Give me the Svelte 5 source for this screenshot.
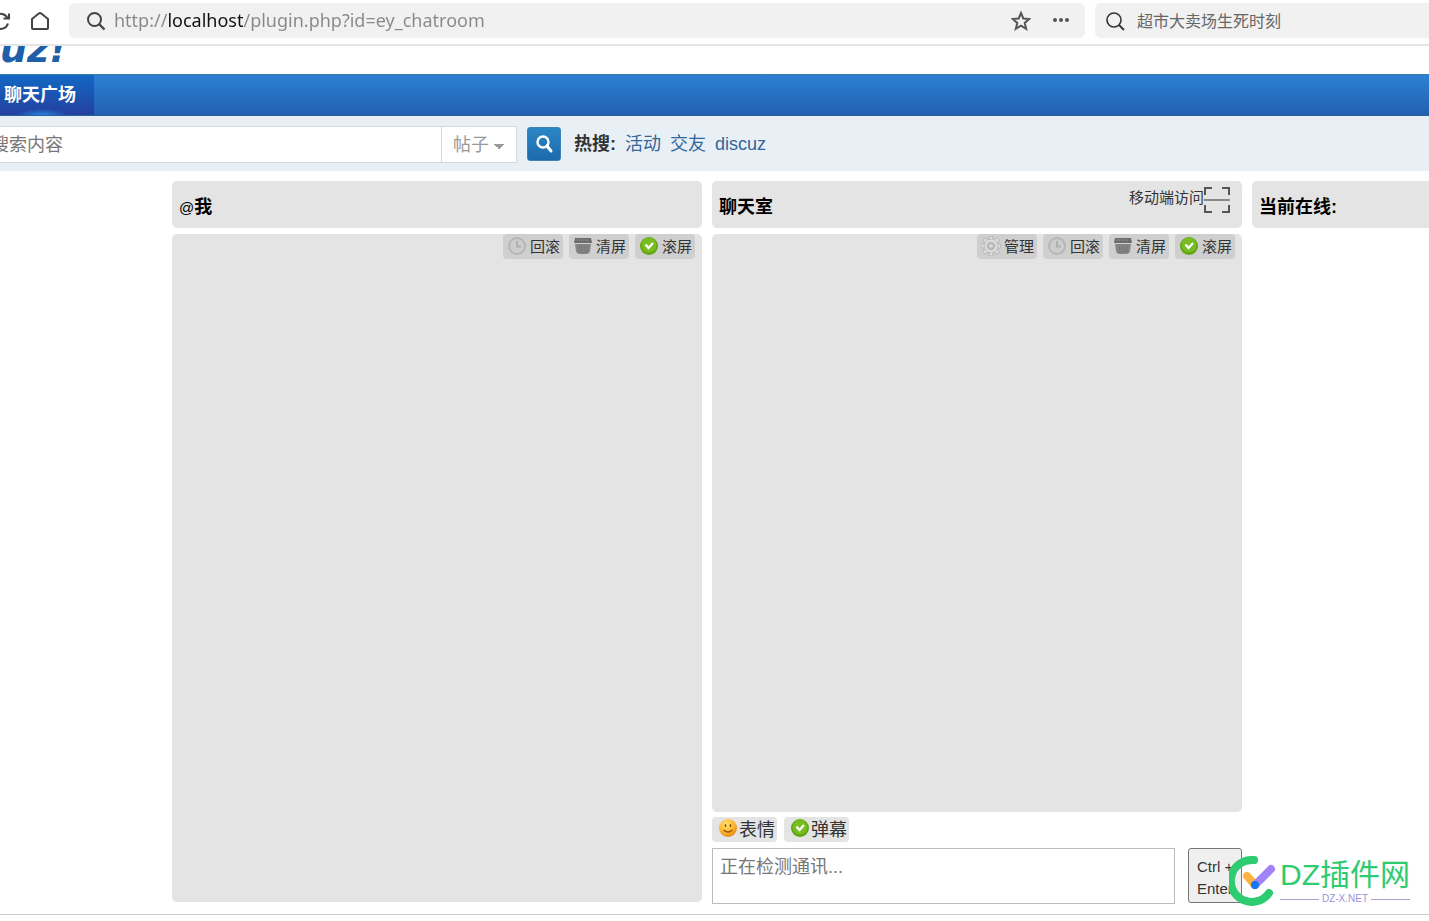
<script lang="ts">
    let url: string = 'http://localhost/plugin.php?id=ey_chatroom';
    let browserQuery: string = '超市大卖场生死时刻';
    let forumQuery: string = '';
    let message: string = '';

    const hotWords: string[] = ['活动', '交友', 'discuz'];

    const mentionTools = [
        { icon: 'clock', label: '回滚' },
        { icon: 'trash', label: '清屏' },
        { icon: 'check', label: '滚屏' }
    ];
    const roomTools = [{ icon: 'gear', label: '管理' }, ...mentionTools];
    const inputTools = [
        { icon: 'smile', label: '表情' },
        { icon: 'check', label: '弹幕' }
    ];

    // Eight teeth around the gear
    const teeth: number[] = [0, 45, 90, 135, 180, 225, 270, 315];
</script>

{#snippet toolIcon(name: string)}
    <svg class="tool-icon" viewBox="0 0 20 20" aria-hidden="true">
        {#if name === 'clock'}
            <circle cx="10" cy="10" r="8" fill="#cdcdcd" stroke="#b6b6b6" stroke-width="2" />
            <path d="M10 5v5.500h4" fill="none" stroke="#b0b0b0" stroke-width="2" />
        {:else if name === 'trash'}
            <path d="M2 2h16l1 5H1z" fill="#6c6c6c" />
            <path d="M4 4h12" stroke="#a5a5a5" stroke-width="1" stroke-dasharray="1 1" />
            <path d="M2 8h16l-1 7q-.5 3-4 3H7q-3.500 0-4-3z" fill="#858585" />
            <path d="M6 9l1 8M9 9v8M12 9v8M15 9l-1 8" stroke="#757575" />
        {:else if name === 'check'}
            <circle cx="10" cy="10" r="9" fill="#62a514" />
            <circle cx="10" cy="9" r="7.500" fill="#78bd20" />
            <path d="M6.500 8.500l3 3.500L14 7" fill="none" stroke="#fff" stroke-width="2.200" />
        {:else if name === 'gear'}
            {#each teeth as angle}
                <rect
                    x="8"
                    y="0"
                    width="4"
                    height="5"
                    rx="1"
                    fill="#dcdcdc"
                    stroke="#aaa"
                    stroke-width=".8"
                    transform="rotate({angle} 10 10)"
                />
            {/each}
            <circle cx="10" cy="10" r="6.800" fill="#dcdcdc" stroke="#b4b4b4" stroke-width=".6" />
            <circle cx="10" cy="10" r="3.500" fill="#c4c4c4" stroke="#a8a8a8" />
            <circle cx="10" cy="10" r="1.500" fill="#dcdcdc" />
        {:else}
            <defs>
                <radialGradient id="face" cx=".4" cy=".3" r=".7">
                    <stop offset="0" stop-color="#ffe173" />
                    <stop offset=".6" stop-color="#fbb92e" />
                    <stop offset="1" stop-color="#e8891a" />
                </radialGradient>
            </defs>
            <circle cx="10" cy="10" r="9" fill="url(#face)" />
            <ellipse cx="7.500" cy="7.500" rx=".8" ry="1.600" fill="#7b4310" />
            <ellipse cx="12.500" cy="7.500" rx=".8" ry="1.600" fill="#7b4310" />
            <path d="M5.500 12q4.500 4 9 0" fill="none" stroke="#a65412" stroke-width="1.200" />
        {/if}
    </svg>
{/snippet}

<div class="page">
    <div class="browser-bar">
        <button class="bar-button reload" aria-label="重新加载">
            <svg width="20" height="20" viewBox="0 0 20 20">
                <path d="M16.500 7A7.500 7.500 0 1 0 17 12.500M18 2.500V7.500H12.500" fill="none" stroke="#444" stroke-width="2" />
            </svg>
        </button>
        <button class="bar-button" aria-label="主页">
            <svg width="20" height="20" viewBox="0 0 20 20">
                <path d="M2 8L9 2.300q1-.6 2 0L18 8V17q0 1-1 1H3q-1 0-1-1z" fill="none" stroke="#444" stroke-width="2" />
            </svg>
        </button>
        <div class="address">
            <svg width="20" height="20" viewBox="0 0 20 20">
                <circle cx="8.500" cy="8.500" r="6.500" fill="none" stroke="#444" stroke-width="2" />
                <path d="M13 13l5.500 5.500" stroke="#444" stroke-width="2.400" />
            </svg>
            <input class="url" type="text" aria-label="地址" bind:value={url} />
            <button class="bar-button" aria-label="收藏">
                <svg width="20" height="20" viewBox="0 0 20 20">
                    <path d="M10 2l2.300 5.500 6 .5-4.600 3.900 1.500 5.900L10 14.600l-5.200 3.200 1.500-5.900L1.700 8l6-.5z" fill="none" stroke="#555" stroke-width="2" />
                </svg>
            </button>
            <button class="bar-button" aria-label="更多">
                <svg width="20" height="20" viewBox="0 0 20 20">
                    <circle cx="4" cy="9" r="2" fill="#555" />
                    <circle cx="10" cy="9" r="2" fill="#555" />
                    <circle cx="16" cy="9" r="2" fill="#555" />
                </svg>
            </button>
        </div>
        <div class="browser-search">
            <svg width="20" height="20" viewBox="0 0 20 20">
                <circle cx="9" cy="9" r="7" fill="none" stroke="#333" stroke-width="1.600" />
                <path d="M14 14l5 5" stroke="#333" stroke-width="1.800" />
            </svg>
            <input type="text" aria-label="搜索" bind:value={browserQuery} />
        </div>
    </div>

    <header class="logo">uz!</header>

    <nav>
        <a class="active" href="#square">聊天广场</a>
    </nav>

    <form class="search-bar" on:submit|preventDefault>
        <div class="search-box">
            <input type="text" placeholder="搜索内容" aria-label="搜索内容" bind:value={forumQuery} />
            <select aria-label="搜索类型">
                <option>帖子</option>
            </select>
        </div>
        <button class="search-button" aria-label="搜索">
            <svg width="20" height="20" viewBox="0 0 20 20">
                <circle cx="9" cy="8" r="5.500" fill="none" stroke="#fff" stroke-width="2.400" />
                <path d="M13 12l4 5" stroke="#fff" stroke-width="3" stroke-linecap="round" />
            </svg>
        </button>
        <div class="hot">
            <strong>热搜:</strong>
            {#each hotWords as word}
                <a href="#hot">{word}</a>
            {/each}
        </div>
    </form>

    <main>
        <section>
            <div class="panel-head"><h2><span class="at">@</span>我</h2></div>
            <div class="panel">
                {#each mentionTools as tool}
                    <button class="tool">{@render toolIcon(tool.icon)}{tool.label}</button>
                {/each}
            </div>
        </section>

        <section>
            <div class="panel-head">
                <h2>聊天室</h2>
                <a class="mobile" href="#mobile">
                    移动端访问
                    <svg width="26" height="26" viewBox="0 0 26 26" fill="none" stroke="#555" stroke-width="2">
                        <path d="M1 8V1H8M18 1H25V8M25 18V25H18M8 25H1V18" />
                        <path d="M0 13H26" stroke="#888" />
                    </svg>
                </a>
            </div>
            <div class="panel">
                {#each roomTools as tool}
                    <button class="tool">{@render toolIcon(tool.icon)}{tool.label}</button>
                {/each}
            </div>
            <div class="input-tools">
                {#each inputTools as tool}
                    <button class="tool large">{@render toolIcon(tool.icon)}{tool.label}</button>
                {/each}
            </div>
            <div class="composer">
                <textarea placeholder="正在检测通讯..." aria-label="消息" bind:value={message}></textarea>
                <button class="send">Ctrl + Enter</button>
            </div>
        </section>

        <section>
            <div class="panel-head online"><h2>当前在线:</h2></div>
        </section>
    </main>

    <div class="watermark">
        <svg width="48" height="52" viewBox="0 0 48 52" fill="none" stroke-linecap="round">
            <path d="M25 5A21 21 0 1 0 40 38" stroke="#2dcc70" stroke-width="8" />
            <path d="M18 21L26 30" stroke="#ffb33e" stroke-width="8" />
            <path d="M26 30L42 14" stroke="#a283f7" stroke-width="8" />
            <circle cx="26" cy="30" r="4" fill="#1677f2" />
        </svg>
        <div class="brand">
            <span class="brand-name">DZ插件网</span>
            <span class="brand-site">DZ-X.NET</span>
        </div>
    </div>
</div>

<style>
    :global(body) {
        margin: 0;
        background: #fff;
    }

    .page {
        position: relative;
        display: flex;
        flex-direction: column;
        box-sizing: border-box;
        min-height: 100vh;
        padding-bottom: 6px;
        overflow: hidden;
        font-family: 'Liberation Sans', 'Noto Sans CJK SC', sans-serif;
        font-size: 18px;
        color: #333;
    }

    button,
    input,
    select,
    textarea {
        font: inherit;
        color: inherit;
        margin: 0;
        padding: 0;
        border: 0;
        background: none;
        box-sizing: border-box;
        outline: none;
    }

    button {
        cursor: pointer;
    }

    a {
        text-decoration: none;
    }

    svg {
        display: block;
        flex-shrink: 0;
    }

    .browser-bar {
        display: flex;
        align-items: center;
        padding: 3px 0 6px;
        border-bottom: 2px solid #e5e5e7;
    }

    .bar-button {
        margin-right: 19px;
    }

    .reload {
        margin-left: -9px;
    }

    .address,
    .browser-search {
        display: flex;
        align-items: center;
        box-sizing: border-box;
        height: 35px;
        background: #f1f1f1;
        border-radius: 6px;
    }

    .address {
        flex: 1;
        padding-left: 17px;
        margin-right: 10px;
    }

    .address .bar-button {
        margin-right: 20px;
    }

    .address .bar-button:last-child {
        margin-right: 14px;
    }

    /* The host part of the address is darker than the rest */
    .url {
        flex: 1;
        height: 35px;
        margin-left: 8px;
        padding-bottom: 2px;
        font-family: 'Noto Sans', sans-serif;
        background: linear-gradient(90deg, #888 54px, #111 54px, #111 130px, #888 130px);
        background-clip: text;
        -webkit-text-fill-color: transparent;
    }

    .browser-search {
        width: 334px;
        padding-left: 10px;
        border-radius: 6px 0 0 6px;
    }

    .browser-search input {
        flex: 1;
        min-width: 0;
        margin-left: 12px;
        padding-bottom: 2px;
        font-size: 16px;
        color: #666;
    }

    .logo {
        height: 28px;
        overflow: hidden;
        font: italic bold 38px/6px 'DejaVu Sans', sans-serif;
        color: #1f5fa9;
    }

    nav {
        display: flex;
        box-sizing: border-box;
        height: 42px;
        border-top: 1px solid #3a7ba8;
        border-bottom: 1px solid #2860a0;
        background: linear-gradient(#2b80d3, #2360b0);
    }

    nav a {
        box-sizing: border-box;
        width: 94px;
        padding-left: 4px;
        line-height: 40px;
        font-weight: bold;
        color: #fff;
        background:
            radial-gradient(ellipse 26px 6px at 42px 100%, #2487e0, transparent),
            linear-gradient(#1268c4, #24409f);
    }

    .search-bar {
        display: flex;
        align-items: center;
        box-sizing: border-box;
        height: 55px;
        padding-top: 1px;
        background: #e8eff5;
    }

    .search-box {
        display: flex;
        box-sizing: border-box;
        width: 527px;
        height: 37px;
        margin: 0 10px 0 -10px;
        border: 1px solid #ced9e2;
        background: #fff;
    }

    .search-box input {
        flex: 1;
        min-width: 0;
        padding-top: 2px;
        color: #666;
    }

    .search-box input::placeholder {
        color: #777;
    }

    .search-box select {
        width: 75px;
        padding: 2px 0 0 11px;
        border-left: 1px solid #ced9e2;
        appearance: none;
        color: #999;
        background:
            linear-gradient(to bottom right, #999 50%, transparent 50%) 57px 17px / 5px 5px no-repeat,
            linear-gradient(to bottom left, #999 50%, transparent 50%) 52px 17px / 5px 5px no-repeat;
    }

    .search-button {
        display: flex;
        align-items: center;
        justify-content: center;
        width: 34px;
        height: 34px;
        margin-right: 13px;
        border: 1px solid #3a82b4;
        border-radius: 3px;
        background: linear-gradient(#2b86c5, #1c6bab);
    }

    .hot {
        display: flex;
        align-items: baseline;
        gap: 9px;
        padding-bottom: 4px;
    }

    .hot a {
        color: #369;
    }

    main {
        flex: 1;
        display: grid;
        grid-template-columns: minmax(0, 1fr) minmax(0, 1fr) 177px;
        gap: 10px;
        padding: 10px 0 10px 172px;
        border-bottom: 1px solid #ccc;
    }

    section {
        display: flex;
        flex-direction: column;
    }

    .panel-head {
        display: flex;
        justify-content: space-between;
        box-sizing: border-box;
        height: 47px;
        margin-bottom: 6px;
        padding: 0 12px 0 7px;
        border-radius: 5px;
        background: #e4e4e4;
    }

    .online {
        border-radius: 5px 0 0 5px;
    }

    h2 {
        margin: 0;
        font-size: 18px;
        line-height: 53px;
        color: #000;
    }

    .at {
        font-size: 15px;
        font-weight: normal;
    }

    .mobile {
        display: flex;
        align-items: flex-start;
        height: 26px;
        margin-top: 6px;
        font-size: 15px;
        line-height: 22px;
        color: #333;
    }

    .panel {
        flex: 1;
        display: flex;
        align-items: flex-start;
        justify-content: flex-end;
        gap: 6px;
        padding-right: 7px;
        border-radius: 5px;
        background: #e4e4e4;
    }

    section:first-child .panel {
        margin-bottom: 2px;
    }

    .tool {
        display: flex;
        align-items: center;
        gap: 3px;
        height: 25px;
        padding: 0 3px 2px 4px;
        border-radius: 4px;
        font-size: 15px;
        background: #cfcfcf;
    }

    .tool-icon {
        width: 20px;
        height: 20px;
    }

    .input-tools {
        display: flex;
        gap: 7px;
        padding: 5px 0 6px;
    }

    .tool.large {
        gap: 1px;
        padding: 0 2px 3px 6px;
        font-size: 18px;
        background: #e4e4e4;
    }

    .composer {
        display: flex;
        gap: 13px;
    }

    textarea {
        flex: 1;
        height: 56px;
        padding: 3px 7px;
        border: 1px solid #bbb;
        resize: none;
    }

    textarea::placeholder {
        color: #777;
    }

    .send {
        width: 54px;
        height: 55px;
        padding: 5px 0 0 8px;
        border: 1px solid #767676;
        border-radius: 3px;
        font-size: 15px;
        line-height: 22px;
        text-align: left;
        background: #efefef;
    }

    .watermark {
        position: absolute;
        right: 19px;
        bottom: 14px;
        display: flex;
        gap: 3px;
        color: #2dcc70;
    }

    .brand {
        display: flex;
        flex-direction: column;
    }

    .brand-name {
        font-size: 30px;
        line-height: 40px;
    }

    .brand-site {
        display: flex;
        align-items: center;
        gap: 3px;
        font-size: 10px;
        line-height: 8px;
        color: #9d8fd8;
    }

    .brand-site::before,
    .brand-site::after {
        content: '';
        flex: 1;
        border-top: 1px solid #a9a0d0;
    }
</style>
